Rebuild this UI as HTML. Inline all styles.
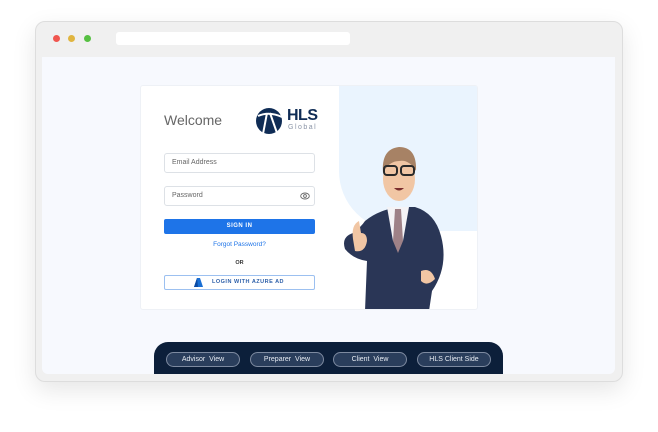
<!DOCTYPE html>
<html><head><style>
*{margin:0;padding:0;box-sizing:border-box}
body{width:658px;height:432px;background:#fff;font-family:"Liberation Sans",sans-serif;position:relative;overflow:hidden}
.abs{position:absolute}
.win{left:35px;top:21px;width:588px;height:361px;border-radius:10px;background:#f0f0f0;border:1px solid #ddd;box-shadow:0 8px 24px rgba(0,0,0,.10)}
.content{left:42px;top:57px;width:573px;height:317px;background:#f7f9fe;border-radius:0 0 6px 6px}
.dot{width:7px;height:7px;border-radius:50%;top:35px}
.card{left:140px;top:85px;width:338px;height:225px;background:#fff;border:1px solid #eef1f6;border-radius:3px;overflow:hidden}
.inp{left:23px;width:151px;height:20px;border:1px solid #dde1e6;border-radius:3px;font-size:7px;color:#666;padding:5px 7px}
.pill{top:352px;width:74px;height:15px;border:1px solid #7d8aa0;border-radius:8px;background:#2a3e5c;color:#e6ebf2;font-size:7px;text-align:center;line-height:13px}
</style></head><body>
<div class="abs win"></div>
<div class="abs dot" style="left:53px;background:#f0564f"></div>
<div class="abs dot" style="left:68px;background:#e0b540"></div>
<div class="abs dot" style="left:84px;background:#56c042"></div>
<div class="abs" style="left:116px;top:32px;width:234px;height:13px;background:#fff;border-radius:3px"></div>
<div class="abs content"></div>
<div class="abs card">
  <div class="abs" style="left:198px;top:0;width:140px;height:145px;background:#eaf4fe;border-bottom-left-radius:60px"></div>
  <div class="abs" style="left:23px;top:26px;font-size:14px;color:#666">Welcome</div>
  <svg class="abs" style="left:114px;top:21px" width="30" height="28" viewBox="0 0 30 28">
    <circle cx="14" cy="14" r="13" fill="#0f2c55"/>
    <path d="M3 9 Q14 4 27 10" stroke="#fff" stroke-width="2" fill="none"/>
    <path d="M12 6 L8 27 M15 6 L22 26" stroke="#fff" stroke-width="2" fill="none"/>
  </svg>
  <div class="abs" style="left:146px;top:21px;font-size:16px;font-weight:bold;color:#0f2c55;letter-spacing:-.5px">HLS</div>
  <div class="abs" style="left:147px;top:38px;font-size:7px;color:#8a94a6;letter-spacing:1.5px">Global</div>
  <div class="abs inp" style="top:67px">Email Address</div>
  <div class="abs inp" style="top:100px">Password</div>
  <svg class="abs" style="left:159px;top:106px" width="10" height="8" viewBox="0 0 10 8"><ellipse cx="5" cy="4" rx="4.3" ry="3" fill="none" stroke="#666" stroke-width=".9"/><circle cx="5" cy="4" r="1.4" fill="none" stroke="#666" stroke-width=".9"/></svg>
  <div class="abs" style="left:23px;top:133px;width:151px;height:15px;background:#1e74e8;border-radius:2px;color:#fff;font-size:6px;font-weight:bold;text-align:center;line-height:15px;letter-spacing:.5px">SIGN IN</div>
  <div class="abs" style="left:23px;top:155px;width:151px;text-align:center;font-size:6.5px;color:#1e74e8">Forgot Password?</div>
  <div class="abs" style="left:23px;top:174px;width:151px;text-align:center;font-size:5.5px;color:#333;font-weight:bold">OR</div>
  <div class="abs" style="left:23px;top:189px;width:151px;height:15px;border:1px solid #9cc0f0;border-radius:2px;font-size:5.5px;color:#2d5fa8;font-weight:bold;line-height:13px;padding-left:47px;letter-spacing:.5px">LOGIN WITH AZURE AD</div>
  <svg class="abs" style="left:53px;top:192px" width="9" height="9" viewBox="0 0 9 9"><path d="M3 0 L6 0 L9 9 L0 9 Z" fill="#1a6fd4"/><path d="M3 0 L0 9 L4 9 Z" fill="#0b4aa3"/></svg>
  <!-- character -->
  <svg class="abs" style="left:196px;top:55px" width="120" height="170" viewBox="0 0 120 170">
    <path d="M28 80 Q40 70 60 66 L78 66 Q98 72 104 95 Q112 125 95 150 L92 170 L28 170 L30 120 Q16 118 8 108 Q4 96 16 92 Q24 86 28 80Z" fill="#2a3656"/>
    <path d="M50 66 L72 66 L66 100 L56 100Z" fill="#f4f3f6"/>
    <path d="M58 68 L64 68 L66 100 L61 112 L56 100Z" fill="#9e8187"/>
    <ellipse cx="62" cy="38" rx="16" ry="22" fill="#f1c6a4"/>
    <path d="M46 32 Q44 8 62 6 Q80 6 79 30 Q72 18 62 20 Q52 20 46 32Z" fill="#a78265"/>
    <rect x="47" y="25" width="13" height="9" rx="3" fill="none" stroke="#2a2a2a" stroke-width="2"/>
    <rect x="64" y="25" width="13" height="9" rx="3" fill="none" stroke="#2a2a2a" stroke-width="2"/>
    <path d="M57 47 Q62 52 67 47Z" fill="#7a2d2d"/>
    <path d="M16 98 Q14 84 22 80 L24 92 Q30 92 30 100 Q28 112 18 110Z" fill="#f1c6a4"/>
    <path d="M84 130 Q94 126 98 138 Q90 146 84 140Z" fill="#f1c6a4"/>
  </svg>
</div>
<div class="abs" style="left:154px;top:342px;width:349px;height:32px;background:#0c1f3a;border-radius:14px 14px 0 0"></div>
<div class="abs pill" style="left:166px">Advisor &nbsp;View</div>
<div class="abs pill" style="left:250px">Preparer &nbsp;View</div>
<div class="abs pill" style="left:333px">Client &nbsp;View</div>
<div class="abs pill" style="left:417px">HLS Client Side</div>
</body></html>
